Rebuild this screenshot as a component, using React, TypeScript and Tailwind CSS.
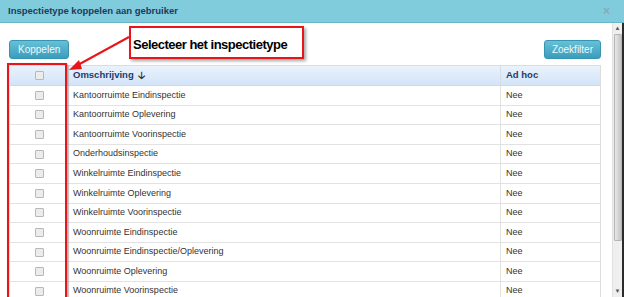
import React from "react";

const rows = [
  "Kantoorruimte Eindinspectie",
  "Kantoorruimte Oplevering",
  "Kantoorruimte Voorinspectie",
  "Onderhoudsinspectie",
  "Winkelruimte Eindinspectie",
  "Winkelruimte Oplevering",
  "Winkelruimte Voorinspectie",
  "Woonruimte Eindinspectie",
  "Woonruimte Eindinspectie/Oplevering",
  "Woonruimte Oplevering",
  "Woonruimte Voorinspectie",
];

function Box() {
  return <div className="w-[9px] h-[9px] border border-[#b8b8b8] bg-[#ececec] rounded-[1px]" />;
}

export default function App() {
  return (
    <div className="relative w-[624px] h-[297px] overflow-hidden bg-white" style={{ fontFamily: '"Liberation Sans", Arial, sans-serif' }}>
      <div className="h-[23px] bg-[#80cbdc] border-b border-[#6bb7c9] flex items-center justify-between pl-[8px] pr-[14px]">
        <span className="text-[9.5px] font-bold text-[#1d3b5c]">Inspectietype koppelen aan gebruiker</span>
        <span className="text-[12px] font-bold text-[#8aaab3] leading-none">×</span>
      </div>
      <div className="flex h-[274px]">
        <div className="flex-1 pl-[9px] pr-[11px]">
          <div className="flex justify-between mt-[17px]">
            <button className="h-[19px] px-[8px] rounded-[3px] bg-gradient-to-b from-[#67c0d6] to-[#3a9dbd] border border-[#3794b2] text-[#eef8fb] text-[10px]">Koppelen</button>
            <button className="h-[19px] px-[7px] rounded-[3px] bg-gradient-to-b from-[#67c0d6] to-[#3a9dbd] border border-[#3794b2] text-[#eef8fb] text-[10px]">Zoekfilter</button>
          </div>
          <div className="mt-[6px] border border-[#dcdcdc]">
            <div className="flex h-[20px] bg-gradient-to-b from-[#eaf2fc] to-[#d3e4f8] border-b border-[#cfd9e4] text-[9.5px] font-bold text-[#1d3b6c]">
              <div className="w-[59px] flex items-center justify-center border-r border-[#d6dde6]"><Box /></div>
              <div className="flex-1 flex items-center pl-[4px] border-r border-[#d6dde6]">Omschrijving <span className="ml-[4px] text-[10px] text-[#333]">🡣</span></div>
              <div className="w-[99px] flex items-center pl-[5px]">Ad hoc</div>
            </div>
            {rows.map((r) => (
              <div key={r} className="flex h-[19.6px] border-b border-[#e2e2e2] text-[9px] text-[#333]">
                <div className="w-[59px] flex items-center justify-center border-r border-[#e2e2e2]"><Box /></div>
                <div className="flex-1 flex items-center pl-[4px] border-r border-[#e2e2e2]">{r}</div>
                <div className="w-[99px] flex items-center pl-[5px]">Nee</div>
              </div>
            ))}
          </div>
        </div>
        <div className="w-[10px] bg-[#efefef] border-l border-[#e0e0e0] flex flex-col items-center">
          <div className="h-[11px] text-[6px] text-[#555] leading-[11px]">▲</div>
          <div className="w-[8px] h-[207px] bg-gradient-to-r from-[#e8e8e8] to-[#c4c4c4] border border-[#b5b5b5] rounded-[1px]" />
          <div className="flex-1" />
          <div className="h-[11px] text-[6px] text-[#555] leading-[11px]">▼</div>
        </div>
        <div className="w-[2px] bg-[#2b2b2b]" />
      </div>

      {/* annotations */}
      <div className="absolute left-[7px] top-[63px] w-[60px] h-[250px] border-2 border-[#e8161b] shadow-[1px_1px_2px_rgba(0,0,0,0.4)]" />
      <div className="absolute left-[129px] top-[26px] w-[175px] h-[33px] bg-white border-2 border-[#e8161b] shadow-[2px_2px_3px_rgba(0,0,0,0.35)] pl-[2px] pt-[4px]">
        <span className="text-[13px] font-bold text-black tracking-[-0.5px]">Selecteer het inspectietype</span>
      </div>
      <svg className="absolute left-0 top-0" width="624" height="297">
        <line x1="129" y1="37" x2="76" y2="66" stroke="#e8161b" strokeWidth="2" />
        <polygon points="69,70 79,60 82,69" fill="#e8161b" />
      </svg>
    </div>
  );
}
